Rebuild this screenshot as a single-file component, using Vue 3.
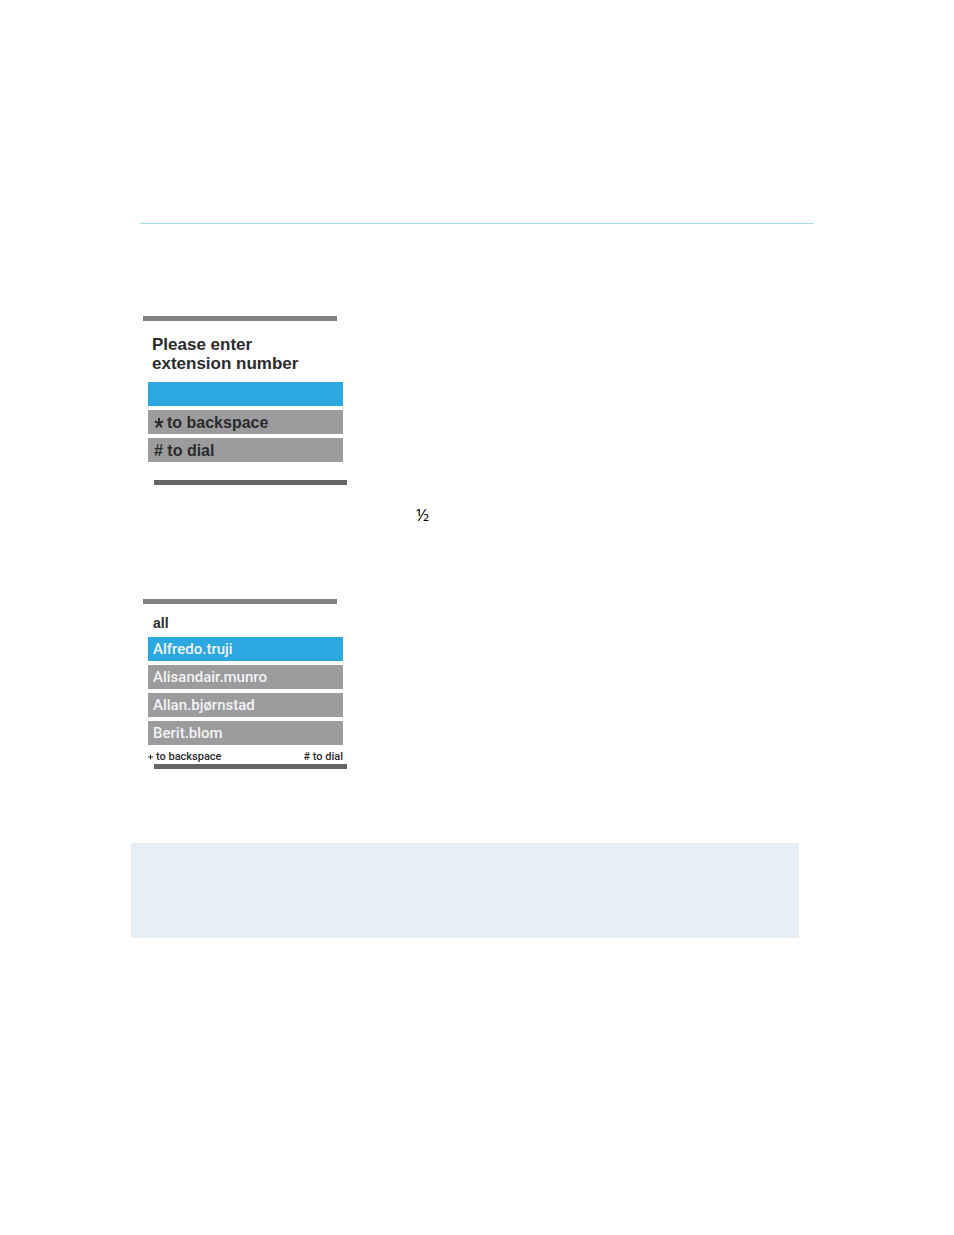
<template>
  <main class="page">
    <hr class="divider" />

    <section class="screen">
      <div class="bar bar-top"></div>
      <div class="body dialer">
        <label class="prompt" for="extension">Please enter<br />extension number</label>
        <input id="extension" v-model="extension" class="row active" type="text" />
        <button class="row action" type="button" @click="backspace">
          <svg class="star" viewBox="0 0 10 12" aria-hidden="true">
            <path d="M5 6V1M5 6L.8 4.4M5 6L9.2 4.4M5 6L2.2 10.4M5 6L7.8 10.4" />
          </svg>
          to backspace
        </button>
        <button class="row action" type="button"># to dial</button>
      </div>
      <div class="bar bar-bottom"></div>
    </section>

    <p class="fraction">½</p>

    <section class="screen">
      <div class="bar bar-top"></div>
      <div class="body">
        <h2 class="filter">all</h2>
        <button
          v-for="(contact, i) in contacts"
          :key="contact"
          class="row contact"
          :class="{ active: i === selected }"
          type="button"
          @click="selected = i"
        >
          {{ contact }}
        </button>
        <div class="hints">
          <span class="hint">
            <svg class="star-small" viewBox="0 0 5 6" aria-hidden="true">
              <path d="M2.5 .5V5.5M0 3H5" />
            </svg>
            to backspace
          </span>
          <span class="hint"># to dial</span>
        </div>
      </div>
      <div class="bar bar-bottom"></div>
    </section>

    <aside class="note"></aside>
  </main>
</template>

<script setup>
import { ref } from 'vue'

const extension = ref('')
const selected = ref(0)
const contacts = ['Alfredo.truji', 'Alisandair.munro', 'Allan.bjørnstad', 'Berit.blom']

function backspace() {
  extension.value = extension.value.slice(0, -1)
}
</script>

<style>
body { margin: 0; background: #fff; }
</style>

<style scoped>
.page { padding: 223px 140px 296px; font-family: "Liberation Sans", Arial, sans-serif; color: #2b2b2d; }
.divider { height: 1px; margin: 0 0 92px; border: 0; background: #a9dce6; }
.screen { width: 204px; margin-left: 3px; }
.bar { height: 5px; }
.bar-top { margin-right: 10px; background: #828282; }
.bar-bottom { margin-left: 11px; background: #656567; }
.body { display: flex; flex-direction: column; gap: 4px; padding: 0 4px 0 5px; }
.dialer { padding-bottom: 18px; }
.prompt { padding: 14px 4px 5px; font-size: 17px; line-height: 19px; font-weight: 700; }
.row { display: flex; align-items: center; box-sizing: border-box; width: 100%; height: 24px; margin: 0; padding: 0 5px; border: 0; border-radius: 0; background: #9c9c9f; font-family: inherit; text-align: left; }
.row.active { background: #2ba8e0; }
.row:focus { outline: none; }
.action { gap: 3px; padding: 2px 6px 0; color: #2b2b2d; font-size: 16px; font-weight: 700; }
.star { width: 10px; height: 12px; fill: none; stroke: #2b2b2d; stroke-width: 2; }
.fraction { margin: 20px 0 74px 276px; font-family: "Open Sans", sans-serif; font-size: 17px; line-height: 20px; color: #000; }
.filter { margin: 0; padding: 9px 5px 0; font-size: 14px; line-height: 20px; font-weight: 700; }
.contact { color: #f2f2f4; font-family: Roboto, sans-serif; font-size: 15px; font-weight: 500; }
.hints { display: flex; justify-content: space-between; height: 15px; font-family: Roboto, sans-serif; font-size: 11px; line-height: 13px; font-weight: 500; }
.hint { display: flex; align-items: center; gap: 3px; }
.star-small { width: 5px; height: 6px; fill: none; stroke: #2b2b2d; stroke-width: 1; }
.note { height: 95px; margin: 74px 15px 0 -9px; background: #e6eef6; }
</style>
